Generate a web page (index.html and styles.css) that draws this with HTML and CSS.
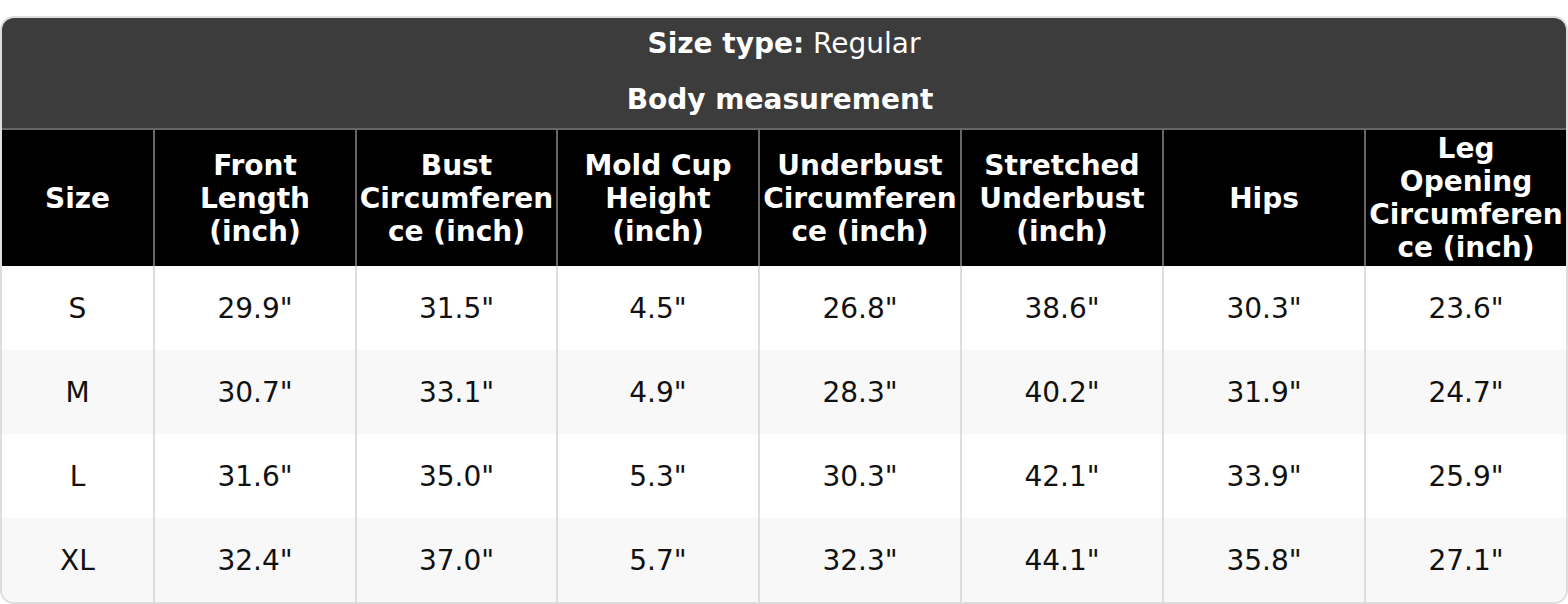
FILE: index.html
```html
<!DOCTYPE html>
<html>
<head>
<meta charset="utf-8">
<link rel="stylesheet" href="styles.css">
</head>
<body>
<div class="card">
  <div class="caption">
    <div class="line first"><b>Size type:</b> Regular</div>
    <div class="line second"><b>Body measurement</b></div>
  </div>
  <table class="chart">
    <thead>
      <tr>
        <th class="c1">Size</th>
        <th class="c2">Front Length (inch)</th>
        <th class="c3">Bust Circumference (inch)</th>
        <th class="c4">Mold Cup Height (inch)</th>
        <th class="c5">Underbust Circumference (inch)</th>
        <th class="c6">Stretched Underbust (inch)</th>
        <th class="c7">Hips</th>
        <th class="c8">Leg Opening Circumference (inch)</th>
      </tr>
    </thead>
    <tbody>
      <tr><td>S</td><td>29.9"</td><td>31.5"</td><td>4.5"</td><td>26.8"</td><td>38.6"</td><td>30.3"</td><td>23.6"</td></tr>
      <tr class="alt"><td>M</td><td>30.7"</td><td>33.1"</td><td>4.9"</td><td>28.3"</td><td>40.2"</td><td>31.9"</td><td>24.7"</td></tr>
      <tr><td>L</td><td>31.6"</td><td>35.0"</td><td>5.3"</td><td>30.3"</td><td>42.1"</td><td>33.9"</td><td>25.9"</td></tr>
      <tr class="alt"><td>XL</td><td>32.4"</td><td>37.0"</td><td>5.7"</td><td>32.3"</td><td>44.1"</td><td>35.8"</td><td>27.1"</td></tr>
    </tbody>
  </table>
</div>
</body>
</html>
```
FILE: styles.css
```css
html, body {
  margin: 0;
  padding: 0;
  background: #ffffff;
}
body {
  font-family: "DejaVu Sans", sans-serif;
  font-size: 28px;
  line-height: 33px;
  color: #111111;
}
.card {
  margin-top: 16px;
  width: 1568px;
  box-sizing: border-box;
  border: 2px solid #dddddd;
  border-radius: 14px;
  overflow: hidden;
  background: #ffffff;
}
.caption {
  background: #3c3c3c;
  color: #ffffff;
  text-align: center;
  padding: 9px 0 12px 0;
}
.caption .second {
  margin-top: 23px;
  padding-right: 8px;
}
.chart {
  width: 100%;
  table-layout: fixed;
  border-collapse: separate;
  border-spacing: 0;
}
.chart th, .chart td {
  box-sizing: border-box;
  text-align: center;
  vertical-align: middle;
  overflow-wrap: anywhere;
  word-break: break-word;
}
.chart th {
  background: #000000;
  color: #ffffff;
  font-weight: bold;
  height: 138px;
  padding: 2px 2px;
  border-top: 2px solid #666666;
  border-left: 2px solid #666666;
}
.chart td {
  height: 84px;
  padding: 0 2px;
  border-left: 2px solid #dddddd;
  background: #ffffff;
}
.chart th:first-child, .chart td:first-child {
  border-left: none;
}
.chart tr.alt td {
  background: #f8f8f8;
}
.c1 { width: 151px; }
.c2 { width: 202px; }
.c3 { width: 201px; }
.c4 { width: 202px; }
.c5 { width: 202px; }
.c6 { width: 202px; }
.c7 { width: 202px; }
.c8 { width: 202px; }
```
